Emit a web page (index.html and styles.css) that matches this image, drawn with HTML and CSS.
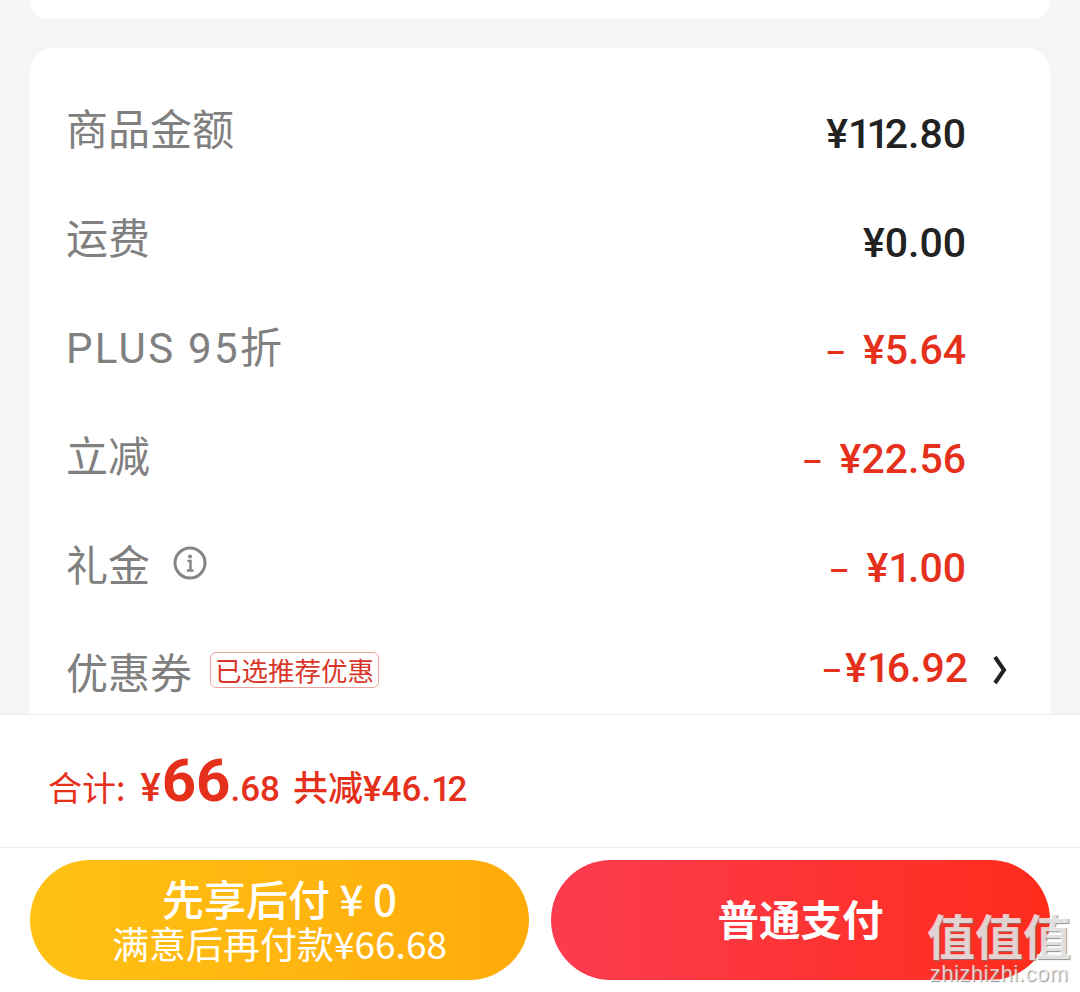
FILE: index.html
```html
<!DOCTYPE html>
<html lang="zh-CN">

<head>
    <meta charset="UTF-8">
    <meta name="viewport" content="width=device-width, initial-scale=1.0">
    <title>确认订单</title>
    <link rel="stylesheet" href="styles.css">
</head>

<body>
    <div class="page">
        <div class="main">
            <div class="card-top"></div>
            <div class="card">
                <div class="row">
                    <div class="label">商品金额</div>
                    <div class="value">¥<span class="ones">11</span>2.80</div>
                </div>
                <div class="row">
                    <div class="label">运费</div>
                    <div class="value">¥0.00</div>
                </div>
                <div class="row">
                    <div class="label"><span class="latin">PLUS 95</span>折</div>
                    <div class="value red"><span class="minus">–</span>¥5.64</div>
                </div>
                <div class="row">
                    <div class="label">立减</div>
                    <div class="value red"><span class="minus">–</span>¥22.56</div>
                </div>
                <div class="row">
                    <div class="label">礼金
                        <svg class="info" width="34" height="34" viewBox="0 0 34 34">
                            <circle cx="17" cy="17" r="15" fill="none" stroke="#858585" stroke-width="3" />
                            <circle cx="17" cy="10.5" r="2" fill="#858585" />
                            <path d="M14.5 15h3v9M14 24.5h6.5" fill="none" stroke="#858585" stroke-width="2.4" />
                        </svg>
                    </div>
                    <div class="value red"><span class="minus">–</span>¥<span class="one">1</span>.00</div>
                </div>
                <div class="row row-coupon">
                    <div class="label">优惠券<span class="tag">已选推荐优惠</span></div>
                    <div class="value red coupon-value">
                        <span><span class="dash">–</span>¥<span class="one">1</span>6.92</span>
                        <svg class="chevron" width="16" height="30" viewBox="0 0 16 30">
                            <path d="M3 2l9 13-9 13" fill="none" stroke="#222" stroke-width="4" />
                        </svg>
                    </div>
                </div>
            </div>
        </div>

        <div class="total">
            <span class="total-label">合计:</span>
            <span class="yen">¥</span><span class="big">66</span><span class="cents">.68</span>
            <span class="saved">共减¥46.<span class="one">1</span>2</span>
        </div>

        <div class="actions">
            <div class="btn btn-later">
                <div class="btn-title">先享后付 ¥ 0</div>
                <div class="btn-sub">满意后再付款¥66.68</div>
            </div>
            <div class="btn btn-pay">普通支付</div>
        </div>

        <!-- 水印 -->
        <div class="watermark">
            <div class="wm-logo">值值值</div>
            <div class="wm-url">zhizhizhi.com</div>
        </div>
    </div>
</body>

</html>
```

FILE: styles.css
```css
body {
    margin: 0;
    font-family: "Noto Sans CJK SC", "Noto Sans", sans-serif;
}
.page {
    width: 1080px; height: 992px;
    position: relative;
    overflow: hidden;
    background-color: #fff;
    display: flex;
    flex-direction: column;
}
.main {
    height: 714px;
    padding: 0 30px;
    background-color: #f5f5f5;
    overflow: hidden;
    flex-shrink: 0;
}
.card-top {
    height: 19px;
    background-color: #fff;
    border-radius: 0 0 24px 24px;
    margin-bottom: 29px;
}
.card {
    background-color: #fff;
    border-radius: 24px 24px 0 0;
    padding: 27px 84px 0 36px;
    height: 700px;
}
/*rows*/
.row {
    height: 109px;
    display: flex;
    justify-content: space-between;
    align-items: center;
}
.label {
    font-family: Roboto, "Noto Sans CJK SC", sans-serif;
    font-size: 42px;
    line-height: 50px;
    color: #808080;
    display: flex;
    align-items: center;
    padding-top: 2px;
}
.latin {
    letter-spacing: 2.3px;
    white-space: pre;
}
.value {
    font-family: Roboto, sans-serif;
    font-weight: 500;
    font-size: 41px;
    color: #222;
    padding-top: 8px;
    line-height: 50px;
}
.red {
    color: #e5311c;
}
.one {
    letter-spacing: -3.5px;
}
.ones {
    letter-spacing: -5px;
}
.minus, .dash {
    font-size: 32px;
}
.minus {
    margin-right: 17px;
}
.dash {
    margin-right: 3px;
}
.info {
    margin: 0 0 8px 23px;
}
.row-coupon {
    margin-right: -42px;
    height: 108px;
}
.tag {
    font-family: "Noto Sans CJK SC", sans-serif;
    font-size: 26.5px;
    line-height: 34px;
    color: #d9362b;
    border: 1px solid #e8a49e;
    border-radius: 6px;
    padding: 0 4px;
    margin: 0 0 10px 18px;
}
.coupon-value {
    display: flex;
    align-items: center;
    padding: 0 0 9px 0;
    gap: 24px;
}
/*total*/
.total {
    height: 134px;
    border-top: 1px solid #eee;
    border-bottom: 1px solid #eee;
    box-sizing: border-box;
    padding: 28px 0 0 48px;
    color: #e5311c;
    display: flex;
    align-items: baseline;
    line-height: 76px;
    flex-shrink: 0;
    font-size: 34px;
}
.total-label {
    margin-right: 15px;
}
.yen {
    font-family: Roboto, sans-serif;
    font-weight: 500;
    font-size: 38px;
    margin-right: 1px;
}
.big {
    font-family: Roboto, sans-serif;
    font-weight: 700;
    font-size: 60px;
}
.cents {
    font-family: Roboto, sans-serif;
    font-weight: 500;
    font-size: 35px;
    margin-right: 13px;
}
.saved {
    font-family: Roboto, "Noto Sans CJK SC", sans-serif;
    font-weight: 500;
    font-size: 35px;
}
/*buttons*/
.actions {
    display: flex;
    gap: 22px;
    padding: 12px 30px 0;
}
.btn {
    flex: 1;
    height: 120px;
    border-radius: 60px;
    color: #fff;
    display: flex;
    flex-direction: column;
    align-items: center;
    justify-content: center;
}
.btn-later {
    background: linear-gradient(90deg, #ffc115, #ffab0a);
}
.btn-pay {
    background: linear-gradient(90deg, #fb3c50, #ff2c1b);
    font-size: 41.5px;
    font-weight: 700;
    box-sizing: border-box;
    padding-bottom: 4px;
}
.btn-title {
    font-size: 42px;
    line-height: 46px;
    font-weight: 500;
}
.btn-sub {
    font-size: 37px;
    line-height: 44px;
}
/*watermark*/
.watermark {
    position: absolute;
    right: 8px; bottom: 6px;
    width: 146px;
    text-align: center;
    color: rgba(255, 255, 255, 0.72);
    text-shadow: 1px 1px 1px rgba(120, 120, 120, 0.8);
}
.wm-logo {
    font-size: 48px;
    line-height: 56px;
    font-weight: 700;
}
.wm-url {
    font-family: "Liberation Sans", sans-serif;
    font-size: 22px;
    line-height: 24px;
    letter-spacing: 0.5px;
}
```
